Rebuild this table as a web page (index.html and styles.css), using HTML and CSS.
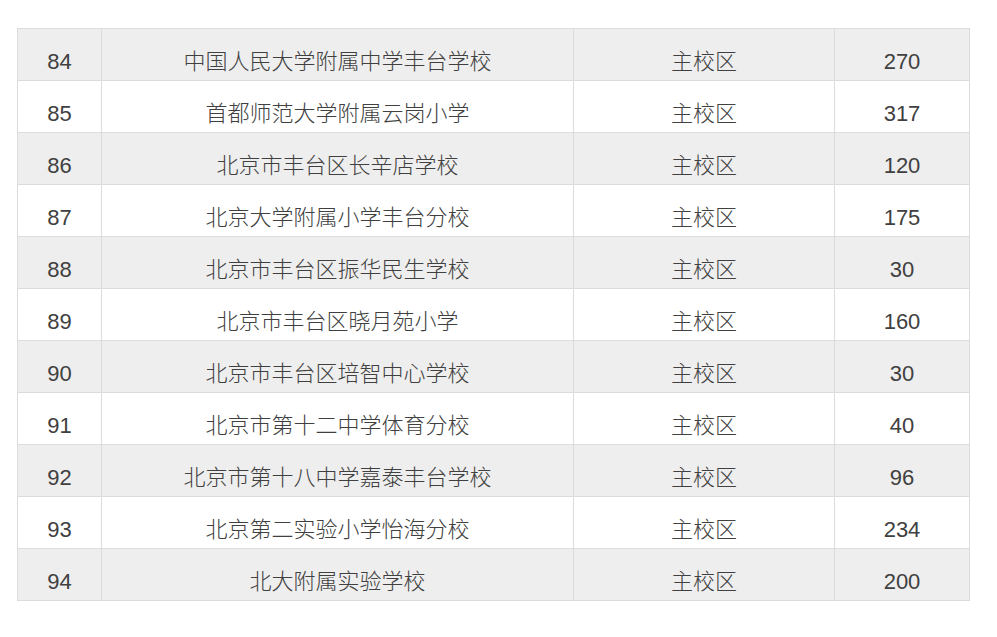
FILE: index.html
```html
<!DOCTYPE html>
<html lang="zh">
<head>
<meta charset="utf-8">
<link rel="stylesheet" href="styles.css">
</head>
<body>
<div class="page">
<table class="list">
<colgroup><col class="c1"><col class="c2"><col class="c3"><col class="c4"></colgroup>
<tbody>
<tr><td>84</td><td>中国人民大学附属中学丰台学校</td><td>主校区</td><td>270</td></tr>
<tr><td>85</td><td>首都师范大学附属云岗小学</td><td>主校区</td><td>317</td></tr>
<tr><td>86</td><td>北京市丰台区长辛店学校</td><td>主校区</td><td>120</td></tr>
<tr><td>87</td><td>北京大学附属小学丰台分校</td><td>主校区</td><td>175</td></tr>
<tr><td>88</td><td>北京市丰台区振华民生学校</td><td>主校区</td><td>30</td></tr>
<tr><td>89</td><td>北京市丰台区晓月苑小学</td><td>主校区</td><td>160</td></tr>
<tr><td>90</td><td>北京市丰台区培智中心学校</td><td>主校区</td><td>30</td></tr>
<tr><td>91</td><td>北京市第十二中学体育分校</td><td>主校区</td><td>40</td></tr>
<tr><td>92</td><td>北京市第十八中学嘉泰丰台学校</td><td>主校区</td><td>96</td></tr>
<tr><td>93</td><td>北京第二实验小学怡海分校</td><td>主校区</td><td>234</td></tr>
<tr><td>94</td><td>北大附属实验学校</td><td>主校区</td><td>200</td></tr>
</tbody>
</table>
</div>
</body>
</html>
```
FILE: styles.css
```css
html, body {
  margin: 0;
  padding: 0;
  background: #ffffff;
}
.page {
  padding: 28px 0 0 17px;
}
.list {
  border-collapse: collapse;
  table-layout: fixed;
  width: 952px;
  font-family: "Liberation Sans", "Noto Sans CJK SC", sans-serif;
  font-size: 22px;
  font-weight: 300;
  color: #404040;
}
.c1 { width: 84px; }
.c2 { width: 472px; }
.c3 { width: 261px; }
.c4 { width: 135px; }
.list td {
  border: 1px solid #dcdcdc;
  text-align: center;
  padding: 18px 0 3px;
  line-height: 30px;
  height: 30px;
}
.list tr:nth-child(odd) td {
  background: #eeeeee;
}
```
